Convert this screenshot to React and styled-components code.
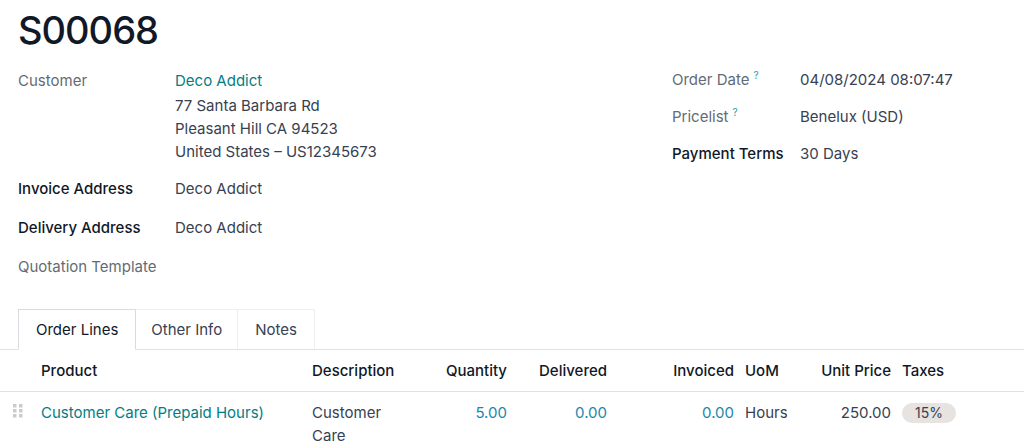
import React from 'react';
import styled, { createGlobalStyle } from 'styled-components';

const Global = createGlobalStyle`
  html, body {
    margin: 0;
    padding: 0;
    background: #fff;
  }
  body {
    font-family: Inter, "Noto Sans", "Liberation Sans", sans-serif;
    font-size: 15px;
    color: #374151;
    overflow: hidden;
  }
`;

const Sheet = styled.div`
  width: 1024px;
`;

const Head = styled.div`
  padding: 7px 18px 0;
`;

const Title = styled.h1`
  margin: 0;
  font-size: 38px;
  line-height: 46px;
  font-weight: 500;
  color: #111827;
  letter-spacing: -1px;
`;

const Groups = styled.div`
  display: grid;
  grid-template-columns: 654px 1fr;
  margin-top: 14px;
`;

const Group = styled.div`
  display: flex;
  flex-direction: column;
  gap: ${(p) => p.$gap}px;
  padding-top: ${(p) => p.$offset || 0}px;
`;

const Field = styled.div`
  display: grid;
  grid-template-columns: ${(p) => p.$label}px 1fr;
  min-height: 25px;
  margin-bottom: ${(p) => p.$pull || 0}px;
`;

const Label = styled.div`
  line-height: 25px;
  color: ${(p) => (p.$strong ? '#111827' : '#646b75')};
  font-weight: ${(p) => (p.$strong ? 500 : 400)};
  white-space: nowrap;
`;

const Help = styled.sup`
  color: #2a9fab;
  font-size: 10px;
  margin-left: 4px;
  vertical-align: 6px;
  line-height: 0;
`;

const Value = styled.div`
  line-height: 25px;
  color: #374151;
`;

const Link = styled.div`
  color: #017e84;
  line-height: 25px;
  margin-bottom: 1px;
`;

const AddrLine = styled.div`
  line-height: 23px;
`;

const Tabs = styled.div`
  display: flex;
  margin-top: 30px;
  padding-left: 18px;
  border-bottom: 1px solid #dee2e6;
  height: 40px;
`;

const Tab = styled.div`
  display: flex;
  align-items: center;
  padding: 0 ${(p) => p.$pad}px;
  border: 1px solid ${(p) => (p.$active ? '#d8dbe0' : '#eceef1')};
  border-bottom: ${(p) => (p.$active ? '1px solid #fff' : 'none')};
  margin-left: ${(p) => (p.$first ? 0 : -1)}px;
  margin-bottom: ${(p) => (p.$active ? -1 : 0)}px;
  background: #fff;
  color: ${(p) => (p.$active ? '#111827' : '#374151')};
  position: relative;
  z-index: ${(p) => (p.$active ? 1 : 0)};
`;

const Row = styled.div`
  display: grid;
  grid-template-columns: 36px 271px 93px 113px 100px 127px 70px 87px 1fr;
  border-bottom: ${(p) => (p.$head ? '1px solid #dee2e6' : 'none')};
  height: ${(p) => (p.$head ? '41px' : 'auto')};
  align-items: ${(p) => (p.$head ? 'center' : 'start')};
  padding-top: ${(p) => (p.$head ? 0 : 9)}px;
`;

const Cell = styled.div`
  padding: 0 6px 0 5px;
  text-align: ${(p) => (p.$right ? 'right' : 'left')};
  line-height: 23px;
  color: ${(p) => (p.$head ? '#111827' : p.$tone || '#374151')};
  font-weight: ${(p) => (p.$head ? 500 : 400)};
  white-space: ${(p) => (p.$wrap ? 'normal' : 'nowrap')};
`;

const Handle = styled.div`
  padding: 3px 0 0 13px;
  line-height: 0;
`;

const Badge = styled.span`
  display: inline-block;
  background: #e6e3e1;
  color: #374151;
  border-radius: 10px;
  padding: 0 13px;
  font-size: 14px;
  line-height: 20px;
`;

const Grip = () => (
  <svg width="10" height="14" viewBox="0 0 10 14">
    {[0, 5, 10].map((y) =>
      [0, 6].map((x) => (
        <rect key={`${x}-${y}`} x={x} y={y} width="3.5" height="3.5" fill="#c9cbcf" />
      ))
    )}
  </svg>
);

export default function App() {
  return (
    <>
      <Global />
      <Sheet>
        <Head>
          <Title>S00068</Title>
          <Groups>
            <Group $gap={14} $offset={1}>
              <Field $label={157} $pull={-1}>
                <Label>Customer</Label>
                <div>
                  <Link>Deco Addict</Link>
                  <AddrLine>77 Santa Barbara Rd</AddrLine>
                  <AddrLine>Pleasant Hill CA 94523</AddrLine>
                  <AddrLine>United States – US12345673</AddrLine>
                </div>
              </Field>
              <Field $label={157}>
                <Label $strong>Invoice Address</Label>
                <Value>Deco Addict</Value>
              </Field>
              <Field $label={157}>
                <Label $strong>Delivery Address</Label>
                <Value>Deco Addict</Value>
              </Field>
              <Field $label={157}>
                <Label>Quotation Template</Label>
                <Value />
              </Field>
            </Group>
            <Group $gap={12}>
              <Field $label={128}>
                <Label>
                  Order Date<Help>?</Help>
                </Label>
                <Value>04/08/2024 08:07:47</Value>
              </Field>
              <Field $label={128}>
                <Label>
                  Pricelist<Help>?</Help>
                </Label>
                <Value>Benelux (USD)</Value>
              </Field>
              <Field $label={128}>
                <Label $strong>Payment Terms</Label>
                <Value>30 Days</Value>
              </Field>
            </Group>
          </Groups>
        </Head>

        <Tabs>
          <Tab $active $first $pad={17}>Order Lines</Tab>
          <Tab $pad={15}>Other Info</Tab>
          <Tab $pad={17}>Notes</Tab>
        </Tabs>

        <Row $head>
          <div />
          <Cell $head>Product</Cell>
          <Cell $head>Description</Cell>
          <Cell $head $right>Quantity</Cell>
          <Cell $head $right>Delivered</Cell>
          <Cell $head $right>Invoiced</Cell>
          <Cell $head>UoM</Cell>
          <Cell $head $right>Unit Price</Cell>
          <Cell $head>Taxes</Cell>
        </Row>
        <Row>
          <Handle>
            <Grip />
          </Handle>
          <Cell $tone="#017e84">Customer Care (Prepaid Hours)</Cell>
          <Cell $wrap>Customer Care</Cell>
          <Cell $right $tone="#1a88ab">5.00</Cell>
          <Cell $right $tone="#1a88ab">0.00</Cell>
          <Cell $right $tone="#1a88ab">0.00</Cell>
          <Cell>Hours</Cell>
          <Cell $right>250.00</Cell>
          <Cell>
            <Badge>15%</Badge>
          </Cell>
        </Row>
      </Sheet>
    </>
  );
}
